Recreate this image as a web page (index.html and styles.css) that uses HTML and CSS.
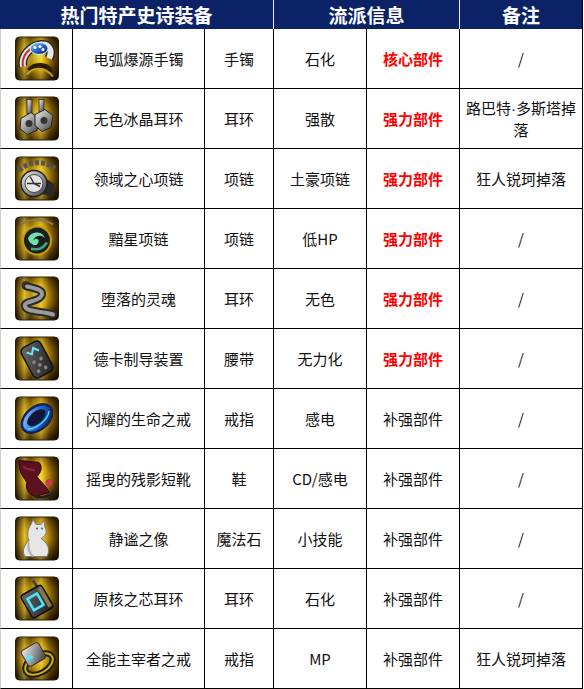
FILE: index.html
```html
<!DOCTYPE html>
<html lang="zh">
<head>
<meta charset="utf-8">
<link rel="stylesheet" href="styles.css">
</head>
<body>
<svg class="defs" width="0" height="0">
  <defs>
    <radialGradient id="gold" cx="50%" cy="45%" r="68%">
      <stop offset="0" stop-color="#ffe23a"/>
      <stop offset="0.4" stop-color="#e0a800"/>
      <stop offset="0.75" stop-color="#6a4600"/>
      <stop offset="1" stop-color="#1e1400"/>
    </radialGradient>
    <linearGradient id="streak" x1="0" y1="0" x2="1" y2="0">
      <stop offset="0" stop-color="#000" stop-opacity="0.35"/>
      <stop offset="0.2" stop-color="#fff36a" stop-opacity="0.35"/>
      <stop offset="0.35" stop-color="#000" stop-opacity="0.25"/>
      <stop offset="0.6" stop-color="#fff36a" stop-opacity="0.3"/>
      <stop offset="0.8" stop-color="#000" stop-opacity="0.25"/>
      <stop offset="1" stop-color="#000" stop-opacity="0.45"/>
    </linearGradient>
    <linearGradient id="steel" x1="0" y1="0" x2="1" y2="1">
      <stop offset="0" stop-color="#f2f2f2"/>
      <stop offset="0.5" stop-color="#9a9a9a"/>
      <stop offset="1" stop-color="#3b3b3b"/>
    </linearGradient>
    <linearGradient id="dark" x1="0" y1="0" x2="1" y2="1">
      <stop offset="0" stop-color="#6b6b6b"/>
      <stop offset="1" stop-color="#1e1e1e"/>
    </linearGradient>
    <linearGradient id="blue" x1="0" y1="0" x2="1" y2="1">
      <stop offset="0" stop-color="#9fd8ff"/>
      <stop offset="0.5" stop-color="#2b66d6"/>
      <stop offset="1" stop-color="#0b1f66"/>
    </linearGradient>
    <g id="bg">
      <rect x="0.5" y="0.5" width="43" height="43" rx="4" fill="url(#gold)" stroke="#2a1a00"/>
      <rect x="1" y="1" width="42" height="42" rx="4" fill="url(#streak)"/>
    </g>
  </defs>
</svg>
<div class="sheet">
  <div class="hd hd-a">热门特产史诗装备</div>
  <div class="hd hd-b">流派信息</div>
  <div class="hd hd-c">备注</div>

  <!-- row 1 -->
  <div class="c ic first"><svg class="icon" viewBox="0 0 44 44"><use href="#bg"/><path d="M8 30 C6 20 14 10 26 8 C34 7 38 14 34 22" fill="none" stroke="#2a2a2a" stroke-width="9"/><path d="M8 30 C6 20 14 10 26 8 C34 7 38 14 34 22" fill="none" stroke="#e8e8e8" stroke-width="6"/><path d="M8 30 C6 20 14 10 26 8" fill="none" stroke="#d23020" stroke-width="2"/><ellipse cx="24" cy="12" rx="9" ry="6" fill="url(#blue)" stroke="#cfe" stroke-width="1"/><circle cx="20" cy="11" r="1.5" fill="#fff"/><circle cx="25" cy="10" r="1.5" fill="#fff"/><circle cx="28" cy="13" r="1.5" fill="#fff"/><path d="M14 34 C20 26 34 28 36 36" fill="none" stroke="#2a1e00" stroke-width="5"/><path d="M12 38 C18 30 30 30 38 40" fill="none" stroke="#c9a020" stroke-width="2"/></svg></div>
  <div class="c first">电弧爆源手镯</div>
  <div class="c first">手镯</div>
  <div class="c first">石化</div>
  <div class="c first red">核心部件</div>
  <div class="c first last">/</div>

  <!-- row 2 -->
  <div class="c ic"><svg class="icon" viewBox="0 0 44 44"><use href="#bg"/><rect x="12" y="3" width="5" height="14" fill="url(#steel)" stroke="#222" stroke-width="0.8"/><rect x="24" y="3" width="5" height="12" fill="url(#steel)" stroke="#222" stroke-width="0.8"/><path d="M6 22 L16 16 L24 22 L22 34 L12 38 L5 32 Z" fill="url(#steel)" stroke="#222"/><circle cx="14" cy="27" r="3.5" fill="#333"/><path d="M20 18 L30 13 L38 19 L36 31 L27 35 L20 29 Z" fill="url(#steel)" stroke="#222"/><circle cx="29" cy="24" r="3.5" fill="#333"/></svg></div>
  <div class="c">无色冰晶耳环</div>
  <div class="c">耳环</div>
  <div class="c">强散</div>
  <div class="c red">强力部件</div>
  <div class="c last wrap"><span class="txt">路巴特<span class="dot">·</span>多斯塔掉<br>落</span></div>

  <!-- row 3 -->
  <div class="c ic"><svg class="icon" viewBox="0 0 44 44"><use href="#bg"/><path d="M4 14 C14 4 30 4 40 12" fill="none" stroke="#555" stroke-width="5" stroke-dasharray="4 2"/><path d="M28 20 L40 28 L38 40 L28 38" fill="#2a2a2a"/><circle cx="19" cy="27" r="13" fill="url(#steel)" stroke="#222" stroke-width="1.5"/><circle cx="19" cy="27" r="9" fill="#e4e4e4" stroke="#444"/><path d="M19 27 L15 20 M19 27 L25 30 M12 27 L26 27" stroke="#333" stroke-width="1.5"/></svg></div>
  <div class="c">领域之心项链</div>
  <div class="c">项链</div>
  <div class="c">土豪项链</div>
  <div class="c red">强力部件</div>
  <div class="c last">狂人锐珂掉落</div>

  <!-- row 4 -->
  <div class="c ic"><svg class="icon" viewBox="0 0 44 44"><use href="#bg"/><path d="M6 8 C14 2 30 2 38 8" fill="none" stroke="#8a7a55" stroke-width="2"/><circle cx="22" cy="24" r="14" fill="#1c1c1c" stroke="#c4a000" stroke-width="2"/><path d="M13 22 C16 14 28 14 30 22 C28 18 20 18 18 24 C22 20 26 24 22 28 C18 30 14 26 13 22 Z" fill="#6fe0b0"/><path d="M16 32 C22 34 28 32 32 26" fill="none" stroke="#3aa880" stroke-width="2.5"/></svg></div>
  <div class="c">黯星项链</div>
  <div class="c">项链</div>
  <div class="c">低HP</div>
  <div class="c red">强力部件</div>
  <div class="c last">/</div>

  <!-- row 5 -->
  <div class="c ic"><svg class="icon" viewBox="0 0 44 44"><use href="#bg"/><circle cx="11" cy="9" r="4" fill="#555" stroke="#222"/><path d="M12 10 C22 12 30 14 26 20 C22 26 8 24 10 30 C12 36 26 34 38 38" fill="none" stroke="#2a2a2a" stroke-width="8" stroke-linecap="round"/><path d="M12 10 C22 12 30 14 26 20 C22 26 8 24 10 30 C12 36 26 34 38 38" fill="none" stroke="#9a9a9a" stroke-width="4" stroke-linecap="round"/></svg></div>
  <div class="c">堕落的灵魂</div>
  <div class="c">耳环</div>
  <div class="c">无色</div>
  <div class="c red">强力部件</div>
  <div class="c last">/</div>

  <!-- row 6 -->
  <div class="c ic"><svg class="icon" viewBox="0 0 44 44"><use href="#bg"/><g transform="rotate(-28 22 23)"><rect x="11" y="6" width="22" height="34" rx="5" fill="url(#dark)" stroke="#111" stroke-width="1.5"/><path d="M16 12 L20 16 L24 11 L28 16" fill="none" stroke="#6fe8ff" stroke-width="2"/><circle cx="18" cy="24" r="1.8" fill="#888"/><circle cx="26" cy="24" r="1.8" fill="#888"/><circle cx="22" cy="29" r="1.8" fill="#888"/><circle cx="18" cy="34" r="1.8" fill="#888"/><circle cx="26" cy="34" r="1.8" fill="#888"/></g></svg></div>
  <div class="c">德卡制导装置</div>
  <div class="c">腰带</div>
  <div class="c">无力化</div>
  <div class="c red">强力部件</div>
  <div class="c last">/</div>

  <!-- row 7 -->
  <div class="c ic"><svg class="icon" viewBox="0 0 44 44"><use href="#bg"/><g transform="rotate(-40 22 22)"><ellipse cx="22" cy="22" rx="18" ry="12" fill="#0d2a70" stroke="#1a1a40" stroke-width="1"/><ellipse cx="22" cy="22" rx="16" ry="10" fill="url(#blue)"/><ellipse cx="22" cy="21" rx="11" ry="6" fill="#10183a"/><path d="M8 24 C14 30 30 30 36 24" fill="none" stroke="#40e0ff" stroke-width="1.5"/></g></svg></div>
  <div class="c">闪耀的生命之戒</div>
  <div class="c">戒指</div>
  <div class="c">感电</div>
  <div class="c">补强部件</div>
  <div class="c last">/</div>

  <!-- row 8 -->
  <div class="c ic"><svg class="icon" viewBox="0 0 44 44"><use href="#bg"/><path d="M4 4 L24 6 C28 10 26 16 22 20 C26 26 32 30 34 36 L20 40 C14 38 10 32 12 26 L8 20 C4 14 4 8 4 4 Z" fill="#5a1220" stroke="#2a0008"/><path d="M8 10 C12 14 16 12 20 14" fill="none" stroke="#8a2a38" stroke-width="2"/><circle cx="34" cy="26" r="3.5" fill="#d0384a"/><path d="M20 40 C28 42 34 40 40 36" fill="none" stroke="#222" stroke-width="3"/></svg></div>
  <div class="c">摇曳的残影短靴</div>
  <div class="c">鞋</div>
  <div class="c">CD/感电</div>
  <div class="c">补强部件</div>
  <div class="c last">/</div>

  <!-- row 9 -->
  <div class="c ic"><svg class="icon" viewBox="0 0 44 44"><use href="#bg"/><path d="M16 8 L18 3 L21 8 L26 8 L29 4 L30 11 C33 16 30 20 26 22 C32 26 36 32 32 40 L10 40 C6 34 10 28 14 24 C12 20 12 14 16 8 Z" fill="#e6e6e6" stroke="#777"/><path d="M14 26 C12 32 14 36 18 40" fill="none" stroke="#b0b0b0" stroke-width="2"/><circle cx="22" cy="12" r="1" fill="#555"/><circle cx="27" cy="12" r="1" fill="#555"/></svg></div>
  <div class="c">静谧之像</div>
  <div class="c">魔法石</div>
  <div class="c">小技能</div>
  <div class="c">补强部件</div>
  <div class="c last">/</div>

  <!-- row 10 -->
  <div class="c ic"><svg class="icon" viewBox="0 0 44 44"><use href="#bg"/><path d="M18 4 L22 10" stroke="#444" stroke-width="3"/><g transform="rotate(-30 22 25)"><rect x="10" y="12" width="24" height="26" rx="3" fill="url(#dark)" stroke="#111" stroke-width="1.5"/><rect x="15" y="18" width="11" height="13" fill="none" stroke="#4de6ff" stroke-width="2.5"/><rect x="29" y="14" width="4" height="22" fill="#8a7a40"/></g></svg></div>
  <div class="c">原核之芯耳环</div>
  <div class="c">耳环</div>
  <div class="c">石化</div>
  <div class="c">补强部件</div>
  <div class="c last">/</div>

  <!-- row 11 -->
  <div class="c ic"><svg class="icon" viewBox="0 0 44 44"><use href="#bg"/><g transform="rotate(-30 22 24)"><ellipse cx="22" cy="28" rx="15" ry="9" fill="none" stroke="#1e1e1e" stroke-width="6"/><ellipse cx="22" cy="28" rx="15" ry="9" fill="none" stroke="#d8b000" stroke-width="2"/><rect x="12" y="8" width="20" height="18" rx="3" fill="url(#steel)" stroke="#333"/><rect x="14" y="16" width="6" height="4" fill="#4de6ff"/></g></svg></div>
  <div class="c">全能主宰者之戒</div>
  <div class="c">戒指</div>
  <div class="c">MP</div>
  <div class="c">补强部件</div>
  <div class="c last">狂人锐珂掉落</div>
</div>
</body>
</html>
```

FILE: styles.css
```css
html, body {
  margin: 0;
  padding: 0;
  background: #ffffff;
}

.defs {
  display: block;
  width: 0;
  height: 0;
  overflow: hidden;
}

.sheet {
  display: grid;
  grid-template-columns: 73px 132px 69px 93px 93px 123px;
  grid-template-rows: 29px repeat(11, 60px);
  width: 583px;
  font-family: "Noto Sans CJK SC", "Microsoft YaHei", sans-serif;
  font-size: 15px;
  color: #111;
}

.hd {
  background: #0b2266;
  color: #ffffff;
  font-weight: bold;
  font-size: 19px;
  display: flex;
  align-items: center;
  justify-content: center;
  box-sizing: border-box;
  line-height: 1;
}

.hd-a {
  grid-column: 1 / 4;
  border-right: 1px solid #e8ecf5;
}

.hd-b {
  grid-column: 4 / 6;
  border-right: 1px solid #e8ecf5;
}

.hd-c {
  grid-column: 6 / 7;
  border-right: 1px solid #000;
}

.c {
  box-sizing: border-box;
  border-right: 1px solid #000;
  border-bottom: 1px solid #000;
  display: flex;
  align-items: center;
  justify-content: center;
  text-align: center;
  white-space: nowrap;
  line-height: 22px;
}

.ic {
  border-left: 1px solid #cfcfcf;
}

.icon {
  width: 44px;
  height: 45px;
  display: block;
}

.red {
  color: #ff0000;
  font-weight: bold;
}

.wrap {
  line-height: 21px;
}

.txt {
  display: block;
}

.dot {
  font-family: "Liberation Sans", sans-serif;
}
```
